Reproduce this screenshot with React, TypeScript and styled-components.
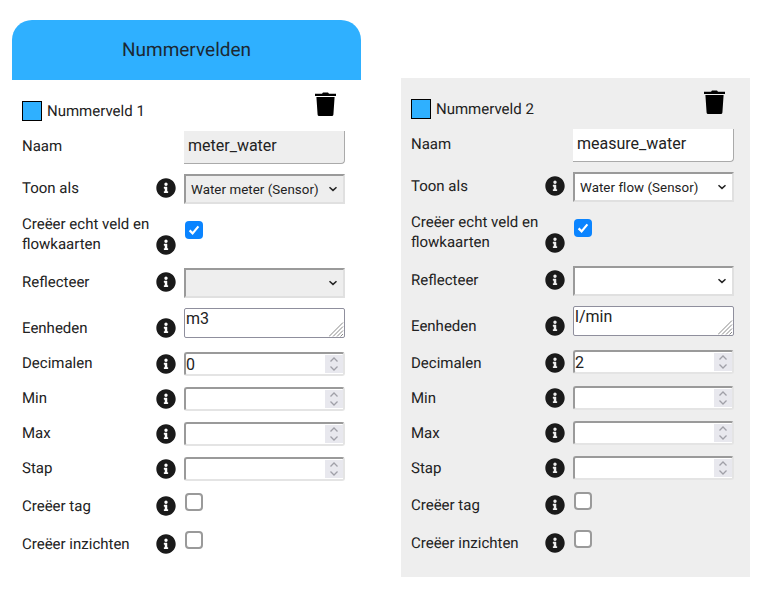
import React from "react";
import styled, { createGlobalStyle } from "styled-components";
import { FaInfoCircle } from "react-icons/fa";

const chevron =
  "url(\"data:image/svg+xml,%3Csvg xmlns='http://www.w3.org/2000/svg' width='10' height='6' viewBox='0 0 10 6'%3E%3Cpath d='M1.5 1.2 5 4.4l3.5-3.2' fill='none' stroke='%23222' stroke-width='1.5'/%3E%3C/svg%3E\")";
const spinner =
  "url(\"data:image/svg+xml,%3Csvg xmlns='http://www.w3.org/2000/svg' width='18' height='18' viewBox='0 0 18 18'%3E%3Crect width='18' height='18' fill='%23e8e8ee'/%3E%3Cpath d='M5.5 6.5 9 3l3.5 3.5M5.5 11.5 9 15l3.5-3.5' fill='none' stroke='%23a0a0a8' stroke-width='1.3'/%3E%3C/svg%3E\")";
const grip =
  "url(\"data:image/svg+xml,%3Csvg xmlns='http://www.w3.org/2000/svg' width='15' height='15' viewBox='0 0 15 15'%3E%3Cpath d='M0 14.5 14 .5M4 14.5 14 4.5M8 14.5 14 8.5M11.5 14.5 14 12' stroke='%23888' stroke-width='1' fill='none'/%3E%3C/svg%3E\")";
const tick =
  "url(\"data:image/svg+xml,%3Csvg xmlns='http://www.w3.org/2000/svg' viewBox='0 0 18 18'%3E%3Cpath d='M4.6 9.4l3 3L13.4 5.4' fill='none' stroke='white' stroke-width='2.2'/%3E%3C/svg%3E\")";

const GlobalStyle = createGlobalStyle`
  html, body {
    margin: 0;
    background: #fff;
    font-family: Roboto, "Liberation Sans", sans-serif;
    color: #222;
    text-rendering: geometricPrecision;
  }
`;

const Page = styled.div`
  width: 765px;
  height: 593px;
  overflow: hidden;
  display: flex;
  align-items: flex-start;
  gap: 40px;
  padding: 20px 0 0 12px;
  box-sizing: border-box;
`;

const Column = styled.div`
  width: 349px;
  flex: none;
`;

const Header = styled.h1`
  margin: 0;
  height: 60px;
  padding-bottom: 2px;
  box-sizing: border-box;
  display: flex;
  align-items: center;
  justify-content: center;
  background: #2fb0ff;
  border-radius: 20px 20px 0 0;
  font-size: 19px;
  font-weight: 400;
  color: #1c2833;
`;

const Panel = styled.section<{ $shaded?: boolean }>`
  display: flex;
  flex-direction: column;
  gap: 10px;
  padding: 12px 16px 20px 10px;
  margin-top: ${(p) => (p.$shaded ? "58px" : "0")};
  background: ${(p) => (p.$shaded ? "#eeeeee" : "transparent")};
`;

const TitleRow = styled.div`
  display: flex;
  align-items: flex-end;
  height: 29px;
`;

const Swatch = styled.span`
  width: 20px;
  height: 20px;
  box-sizing: border-box;
  background: #2fb0ff;
  border: 1px solid #000;
  margin-right: 5px;
`;

const FieldName = styled.span`
  font-size: 15px;
  line-height: 20px;
  flex: 1;
`;

const TrashButton = styled.button`
  align-self: flex-start;
  margin: 0 9px 0 0;
  padding: 0;
  border: 0;
  background: none;
  line-height: 0;
`;

const Row = styled.div<{ $height: number; $labelLift?: number; $iconLift?: number }>`
  display: grid;
  grid-template-columns: 134px 28px 161px;
  height: ${(p) => p.$height}px;
  align-items: center;

  & > label {
    margin-bottom: ${(p) => p.$labelLift ?? 0}px;
  }

  & > span {
    margin-bottom: ${(p) => p.$iconLift ?? 0}px;
  }
`;

const Label = styled.label`
  grid-column: 1;
  font-size: 15px;
  line-height: 20px;
`;

const WrappedLabel = styled(Label)<{ $top?: number }>`
  align-self: start;
  margin-top: ${(p) => p.$top ?? 0}px;
`;

const InfoBadge = styled.span<{ $top?: number }>`
  grid-column: 2;
  display: flex;
  color: #1a1a1a;
  font-size: 20px;
  align-self: ${(p) => (p.$top ? "start" : "center")};
  margin-top: ${(p) => p.$top ?? 0}px;
`;

const TextField = styled.input`
  grid-column: 3;
  align-self: start;
  width: 161px;
  height: 33px;
  box-sizing: border-box;
  padding: 0 0 3px 4px;
  border: 0;
  border-right: 1px solid #aaa;
  border-bottom: 1px solid #aaa;
  border-radius: 0 0 4px 0;
  outline: 0;
  font: 400 16px Roboto, sans-serif;
  color: #222;
  background: ${(p) => (p.readOnly ? "#eeeeee" : "#fff")};
`;

const SelectField = styled.select<{ $muted?: boolean }>`
  grid-column: 3;
  align-self: start;
  appearance: none;
  width: 161px;
  height: 30px;
  box-sizing: border-box;
  padding: 0 0 0 5px;
  border-width: 2px;
  border-style: solid;
  border-color: #9a9a9a #e0e0e0 #e0e0e0 #9a9a9a;
  border-radius: 0;
  font: 400 13.33px Roboto, sans-serif;
  letter-spacing: 0.05px;
  color: #222;
  background: ${chevron} no-repeat right 5px center;
  background-color: ${(p) => (p.$muted ? "#eeeeee" : "#fff")};
`;

const UnitArea = styled.textarea`
  grid-column: 3;
  align-self: start;
  display: block;
  width: 161px;
  height: 30px;
  box-sizing: border-box;
  padding: 1px 1px 0;
  border: 1px solid #8f8f9d;
  border-radius: 2px;
  font: 400 16px Roboto, sans-serif;
  line-height: 18px;
  color: #222;
  background: #fff;

  &::-webkit-resizer {
    background: ${grip} no-repeat;
  }
`;

const NumberField = styled.input`
  grid-column: 3;
  align-self: start;
  width: 161px;
  height: 24px;
  box-sizing: border-box;
  padding: 1px 0 0 0;
  border-width: 2px;
  border-style: solid;
  border-color: #9a9a9a #e4e4e4 #e4e4e4 #9a9a9a;
  border-radius: 3px;
  font: 400 16px Roboto, sans-serif;
  color: #222;
  background: #fff;

  &::-webkit-inner-spin-button {
    appearance: none;
    opacity: 1;
    width: 18px;
    height: 18px;
    margin: 0;
    background: ${spinner} no-repeat center;
  }
`;

const CheckBox = styled.input<{ $top: number }>`
  grid-column: 3;
  align-self: start;
  appearance: none;
  width: 18px;
  height: 18px;
  margin: ${(p) => p.$top}px 0 0 1px;
  box-sizing: border-box;
  border: 2px solid #9a9a9a;
  border-radius: 4px;
  background: #fff;

  &:checked {
    border: 0;
    background: #0a84ff ${tick} no-repeat center / 18px 18px;
  }
`;

const TrashIcon = () => (
  <svg width="21" height="24" viewBox="0 0 21 24">
    <path d="M7 1.8 8 .4h5l1 1.4h7v2.2H0V1.8z" fill="#000" />
    <path d="M1.4 5h18.2l-1.2 17.4a1.6 1.6 0 0 1-1.6 1.6H4.2a1.6 1.6 0 0 1-1.6-1.6z" fill="#000" />
  </svg>
);

interface FieldProps {
  index: number;
  name: string;
  display: string;
  units: string;
  decimals: string;
  shaded?: boolean;
}

const NumberPanel = ({ index, name, display, units, decimals, shaded }: FieldProps) => (
  <Panel $shaded={shaded}>
    <TitleRow>
      <Swatch />
      <FieldName>Nummerveld {index}</FieldName>
      <TrashButton>
        <TrashIcon />
      </TrashButton>
    </TitleRow>
    <Row $height={33} $labelLift={4}>
      <Label>Naam</Label>
      <TextField defaultValue={name} readOnly={!shaded} />
    </Row>
    <Row $height={30} $labelLift={3} $iconLift={2}>
      <Label>Toon als</Label>
      <InfoBadge>
        <FaInfoCircle />
      </InfoBadge>
      <SelectField $muted={!shaded} defaultValue={display}>
        <option>{display}</option>
      </SelectField>
    </Row>
    <Row $height={44}>
      <WrappedLabel>Creëer echt veld en flowkaarten</WrappedLabel>
      <InfoBadge $top={21}>
        <FaInfoCircle />
      </InfoBadge>
      <CheckBox type="checkbox" defaultChecked $top={7} />
    </Row>
    <Row $height={30} $labelLift={2} $iconLift={2}>
      <Label>Reflecteer</Label>
      <InfoBadge>
        <FaInfoCircle />
      </InfoBadge>
      <SelectField $muted={!shaded}>
        <option></option>
      </SelectField>
    </Row>
    <Row $height={34}>
      <WrappedLabel $top={10}>Eenheden</WrappedLabel>
      <InfoBadge $top={10}>
        <FaInfoCircle />
      </InfoBadge>
      <UnitArea defaultValue={units} />
    </Row>
    <Row $height={shaded ? 26 : 25} $labelLift={shaded ? 1 : 4} $iconLift={1}>
      <Label>Decimalen</Label>
      <InfoBadge>
        <FaInfoCircle />
      </InfoBadge>
      <NumberField type="number" defaultValue={decimals} />
    </Row>
    {["Min", "Max", "Stap"].map((label) => (
      <Row $height={25} $labelLift={shaded ? 2 : 3} $iconLift={2} key={label}>
        <Label>{label}</Label>
        <InfoBadge>
          <FaInfoCircle />
        </InfoBadge>
        <NumberField type="number" />
      </Row>
    ))}
    {["Creëer tag", "Creëer inzichten"].map((label) => (
      <Row $height={28} key={label}>
        <Label>{label}</Label>
        <InfoBadge>
          <FaInfoCircle />
        </InfoBadge>
        <CheckBox type="checkbox" $top={1} />
      </Row>
    ))}
  </Panel>
);

const App = () => (
  <Page>
    <GlobalStyle />
    <Column>
      <Header>Nummervelden</Header>
      <NumberPanel index={1} name="meter_water" display="Water meter (Sensor)" units="m3" decimals="0" />
    </Column>
    <Column>
      <NumberPanel index={2} name="measure_water" display="Water flow (Sensor)" units="l/min" decimals="2" shaded />
    </Column>
  </Page>
);

export default App;
